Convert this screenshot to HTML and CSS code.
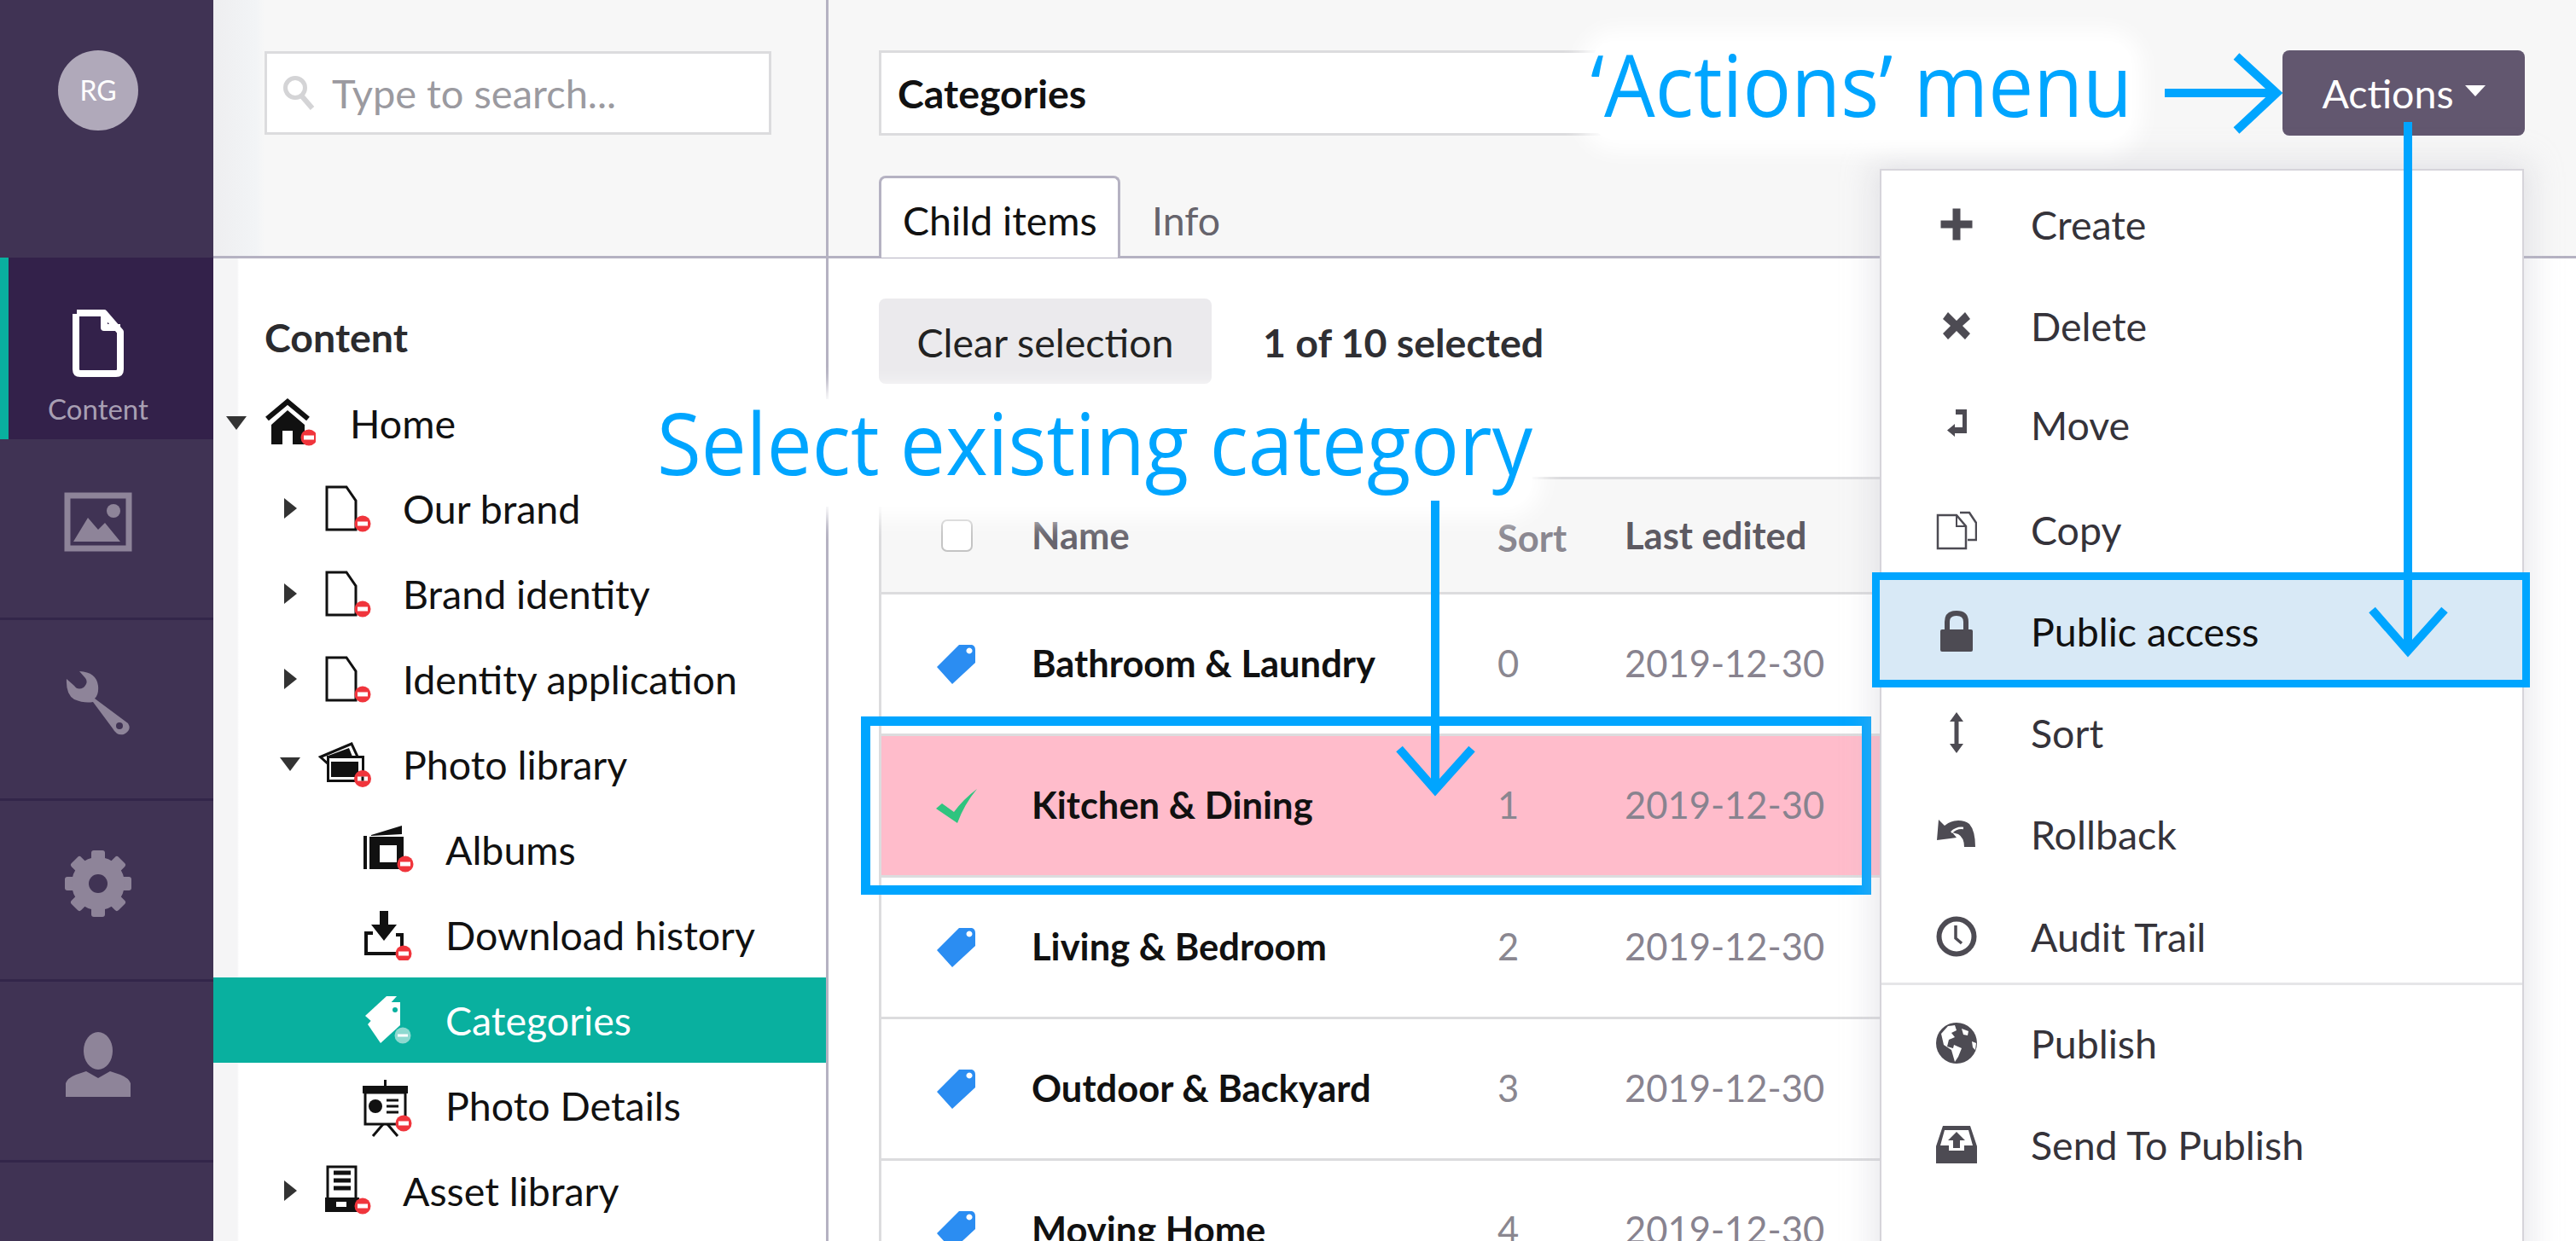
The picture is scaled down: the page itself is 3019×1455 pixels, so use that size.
FILE: index.html
```html
<!DOCTYPE html>
<html lang="en">
<head>
<meta charset="UTF-8">
<title>Categories</title>
<link rel="stylesheet" href="styles.css">
</head>
<body>

<svg class="defs" width="0" height="0">
  <symbol id="badge" viewBox="0 0 60 60">
    <circle cx="44" cy="48" r="9.5" fill="#f0353c"/>
    <rect x="38" y="45.5" width="12" height="5" fill="#fff"/>
  </symbol>
  <symbol id="i-home" viewBox="0 0 60 60">
    <path d="M3 25L27 5L51 25" fill="none" stroke="#111" stroke-width="6"/>
    <path d="M27 15L47 32V55H33V39H21V55H8V32Z" fill="#111"/>
    <circle cx="52" cy="47" r="9.5" fill="#f0353c"/>
    <rect x="46" y="44.5" width="12" height="5" fill="#fff"/>
  </symbol>
  <symbol id="i-doc" viewBox="0 0 60 60">
    <path d="M2 5H25L36 21V55H2Z" fill="#fff" stroke="#111" stroke-width="3"/>
    <use href="#badge"/>
  </symbol>
  <symbol id="i-photos" viewBox="0 0 60 60" overflow="visible">
    <path d="M-5.500 21.500L31 6L38 21V30H4Z" fill="#fff" stroke="#111" stroke-width="3"/>
    <path d="M1 21L28 11L32 21Z" fill="#111"/>
    <rect x="3.500" y="21.500" width="41" height="28" fill="#fff" stroke="#111" stroke-width="3"/>
    <rect x="7" y="27" width="32" height="18" fill="#111"/>
    <circle cx="44" cy="47" r="10" fill="#f0353c"/>
    <rect x="38" y="44.500" width="12" height="5" fill="#fff"/>
    <rect x="42.500" y="44.500" width="3" height="5" fill="#111"/>
  </symbol>
  <symbol id="i-albums" viewBox="0 0 60 60">
    <path d="M10 13L46 2V12L10 14Z" fill="#111"/>
    <rect x="1" y="14" width="4" height="39" fill="#111"/>
    <rect x="8" y="15" width="40" height="38" fill="#111"/>
    <rect x="20" y="25" width="20" height="20" fill="#fff"/>
    <use href="#badge" x="6" y="-1"/>
  </symbol>
  <symbol id="i-download" viewBox="0 0 60 60">
    <path d="M20 2H30V18H40L25 37L10 18H20Z" fill="#111"/>
    <path d="M12 28H4V52H46V30H39" fill="none" stroke="#111" stroke-width="4"/>
    <use href="#badge" x="4" y="4"/>
  </symbol>
  <symbol id="i-tags" viewBox="0 0 60 60">
    <path d="M28 2H40L12 33L3 25Z" fill="#fff"/>
    <path d="M29 9H44V36L21 57L6 35Z" fill="#fff"/>
    <circle cx="38" cy="18" r="3" fill="#09b09f"/>
    <circle cx="47" cy="48" r="9.5" fill="#8ed9d0"/>
    <rect x="41" y="46.5" width="12" height="3" fill="#fff"/>
  </symbol>
  <symbol id="i-board" viewBox="0 0 60 60" overflow="visible">
    <rect x="0" y="7" width="53" height="9" fill="#111"/>
    <rect x="25" y="0" width="3" height="8" fill="#111"/>
    <rect x="3" y="15" width="47" height="37" fill="#fff" stroke="#111" stroke-width="3"/>
    <circle cx="15" cy="31" r="8" fill="#111"/>
    <path d="M28 24H42M28 31H42M28 38H42" stroke="#111" stroke-width="3"/>
    <path d="M24 52L12 66M29 52L41 66" stroke="#111" stroke-width="3"/>
    <use href="#badge" x="4" y="3"/>
  </symbol>
  <symbol id="i-asset" viewBox="0 0 60 60">
    <rect x="3" y="2" width="33" height="40" fill="#fff" stroke="#111" stroke-width="3"/>
    <path d="M10 9H30M10 18H30M10 27H30" stroke="#111" stroke-width="5"/>
    <rect x="0" y="38" width="40" height="17" fill="#111"/>
    <rect x="13" y="43" width="12" height="6" fill="#fff"/>
    <use href="#badge"/>
  </symbol>
  <symbol id="i-tag" viewBox="0 0 48 46">
    <path fill-rule="evenodd" d="M27 0H42Q46 1 46 6V21L19 46L1 26ZM39 3.500A3.500 3.500 0 1 0 39.010 3.500Z" fill="#2b8df2"/>
  </symbol>
</svg>

<div class="app">

  <div class="nav">
    <div class="nav-top"><div class="avatar">RG</div></div>
    <div class="nav-item active">
      <svg width="62" height="80" viewBox="0 0 62 80"><path d="M6 4H38L57 26V70Q57 75 52 75H10Q5 75 5 70V5M38 4V21H57" fill="none" stroke="#fff" stroke-width="8" stroke-linejoin="round"/></svg>
      <span>Content</span>
    </div>
    <div class="nav-item">
      <svg width="80" height="70" viewBox="0 0 80 70"><rect x="4" y="4" width="72" height="62" fill="none" stroke="#8e8499" stroke-width="7"/><circle cx="58" cy="22" r="8" fill="#8e8499"/><path d="M11 58L28 30L40 44L48 36L66 58Z" fill="#8e8499"/></svg>
    </div>
    <div class="nav-item">
      <svg width="76" height="76" viewBox="0 0 76 76"><path d="M16 1Q36 2 38 18Q39 28 34 33L73 62Q78 70 68 75Q60 77 55 68L32 37Q22 39 10 34Q0 28 1 10L10 18Q14 24 21 20Q27 14 23 9Z" fill="#8e8499"/><circle cx="63" cy="65" r="4" fill="#403354"/></svg>
    </div>
    <div class="nav-item">
      <svg width="78" height="78" viewBox="-39 -39 78 78"><g fill="#8e8499"><rect x="-8" y="-39" width="16" height="78" rx="3"/><rect x="-8" y="-39" width="16" height="78" rx="3" transform="rotate(45)"/><rect x="-8" y="-39" width="16" height="78" rx="3" transform="rotate(90)"/><rect x="-8" y="-39" width="16" height="78" rx="3" transform="rotate(135)"/></g><circle r="21" fill="none" stroke="#8e8499" stroke-width="20"/><circle r="11" fill="#403354"/></svg>
    </div>
    <div class="nav-item">
      <svg width="76" height="76" viewBox="0 0 76 76"><ellipse cx="38" cy="22" rx="17" ry="22" fill="#8e8499"/><path d="M0 76V60Q2 54 12 50L24 46L38 54L52 46L64 50Q74 54 76 60V76Z" fill="#8e8499"/></svg>
    </div>
  </div>

  <div class="tree-col">
    <div class="head-box tree-head">
      <div class="search">
        <svg width="38" height="42" viewBox="0 0 38 42"><circle cx="15" cy="15" r="11.500" fill="none" stroke="#d4d4d6" stroke-width="5"/><path d="M23 25L35 39" stroke="#d4d4d6" stroke-width="6"/></svg>
        <span>Type to search...</span>
      </div>
    </div>
    <div class="tree">
      <div class="tree-title">Content</div>
      <div class="tree-row lvl0"><i class="caret down"></i><svg class="ti"><use href="#i-home"/></svg><span>Home</span></div>
      <div class="tree-row lvl1"><i class="caret"></i><svg class="ti"><use href="#i-doc"/></svg><span>Our brand</span></div>
      <div class="tree-row lvl1"><i class="caret"></i><svg class="ti"><use href="#i-doc"/></svg><span>Brand identity</span></div>
      <div class="tree-row lvl1"><i class="caret"></i><svg class="ti"><use href="#i-doc"/></svg><span>Identity application</span></div>
      <div class="tree-row lvl1"><i class="caret down"></i><svg class="ti"><use href="#i-photos"/></svg><span>Photo library</span></div>
      <div class="tree-row lvl2"><svg class="ti"><use href="#i-albums"/></svg><span>Albums</span></div>
      <div class="tree-row lvl2"><svg class="ti"><use href="#i-download"/></svg><span>Download history</span></div>
      <div class="tree-row lvl2 current"><svg class="ti"><use href="#i-tags"/></svg><span>Categories</span></div>
      <div class="tree-row lvl2"><svg class="ti"><use href="#i-board"/></svg><span>Photo Details</span></div>
      <div class="tree-row lvl1"><i class="caret"></i><svg class="ti"><use href="#i-asset"/></svg><span>Asset library</span></div>
    </div>
  </div>

  <div class="main">
    <div class="head-box main-head">
      <div class="title-row">
        <div class="title-input">Categories</div>
        <button class="actions-btn">Actions<i class="btn-caret"></i></button>
      </div>
      <div class="tabs">
        <div class="tab on">Child items</div>
        <div class="tab">Info</div>
      </div>
    </div>
    <div class="body">
      <div class="toolbar">
        <div class="clear-btn">Clear selection</div>
        <div class="sel-count">1 of 10 selected</div>
      </div>
      <div class="table">
        <div class="row thead">
          <div class="c-icon"><i class="check"></i></div>
          <div class="c-name">Name</div>
          <div class="c-sort">Sort</div>
          <div class="c-date">Last edited</div>
        </div>
        <div class="row">
          <div class="c-icon"><svg width="48" height="46"><use href="#i-tag"/></svg></div>
          <div class="c-name">Bathroom &amp; Laundry</div>
          <div class="c-sort">0</div>
          <div class="c-date">2019-12-30</div>
        </div>
        <div class="row picked">
          <div class="c-icon"><svg width="48" height="40" viewBox="0 0 48 40"><path d="M0 23L7 17L21 27Q32 12 48 0Q33 18 25 40Z" fill="#2fc47f"/></svg></div>
          <div class="c-name">Kitchen &amp; Dining</div>
          <div class="c-sort">1</div>
          <div class="c-date">2019-12-30</div>
        </div>
        <div class="row">
          <div class="c-icon"><svg width="48" height="46"><use href="#i-tag"/></svg></div>
          <div class="c-name">Living &amp; Bedroom</div>
          <div class="c-sort">2</div>
          <div class="c-date">2019-12-30</div>
        </div>
        <div class="row">
          <div class="c-icon"><svg width="48" height="46"><use href="#i-tag"/></svg></div>
          <div class="c-name">Outdoor &amp; Backyard</div>
          <div class="c-sort">3</div>
          <div class="c-date">2019-12-30</div>
        </div>
        <div class="row">
          <div class="c-icon"><svg width="48" height="46"><use href="#i-tag"/></svg></div>
          <div class="c-name">Moving Home</div>
          <div class="c-sort">4</div>
          <div class="c-date">2019-12-30</div>
        </div>
      </div>
    </div>
  </div>

  <div class="menu">
    <div class="menu-row"><svg viewBox="0 0 48 48"><path d="M19.500 5.500H28.500V19.500H42.500V28.500H28.500V42.500H19.500V28.500H5.500V19.500H19.500Z" fill="#4d4b53"/></svg>Create</div>
    <div class="menu-row"><svg viewBox="0 0 48 48"><path d="M14 8L24 18L34 8L40 16L31 24L40 33L34 40L24 30L14 40L8 33L17 24L8 16Z" fill="#4d4b53"/></svg>Delete</div>
    <div class="menu-row up"><svg viewBox="0 0 48 48"><path d="M23 6H36V34H22V38L13 30.500L22 23V27H31V12H23Z" fill="#4d4b53"/></svg>Move</div>
    <div class="menu-row"><svg viewBox="0 0 48 48"><path d="M28 4H39L47 16V36H37M2 7H24L35 20V46H2Z" fill="#fff" stroke="#4d4b53" stroke-width="2.500"/><path d="M24 7V20H35" fill="none" stroke="#4d4b53" stroke-width="2"/></svg>Copy</div>
    <div class="menu-row hl"><svg viewBox="0 0 48 48"><path d="M13 24V13Q13 3 24 3Q35 3 35 13V24" fill="none" stroke="#4d4b53" stroke-width="6"/><rect x="5" y="22" width="38" height="26" rx="2" fill="#4d4b53"/></svg>Public access</div>
    <div class="menu-row"><svg viewBox="0 0 48 48"><path d="M24 0L32 11H26.500V37H32L24 48L16 37H21.500V11H16Z" fill="#4d4b53"/></svg>Sort</div>
    <div class="menu-row"><svg viewBox="0 0 48 48"><path d="M3 7L10 14Q17 8 26 8Q34 8 39 12Q46 20 46 39H33Q33 28 26 24L19 22L24 28L1 31Z" fill="#4d4b53"/><path d="M18 22Q24 16 32 17" fill="none" stroke="#fff" stroke-width="2.500"/></svg>Rollback</div>
    <div class="menu-row"><svg viewBox="0 0 48 48"><circle cx="24" cy="24" r="20.500" fill="none" stroke="#4d4b53" stroke-width="6"/><path d="M23 11V26L30 32" fill="none" stroke="#4d4b53" stroke-width="3.500"/></svg>Audit Trail</div>
    <div class="menu-line"></div>
    <div class="menu-row"><svg viewBox="0 0 48 48"><circle cx="24" cy="24" r="24" fill="#4d4b53"/><path d="M6 13L14 4L22 3L24 9L18 12L22 17L15 20L13 28L20 30L21 26L30 30L26 40L22 46L18 32L9 26ZM30 7L38 10L37 15L32 14ZM42 22L47 24L46 32L43 29Z" fill="#fff"/></svg>Publish</div>
    <div class="menu-row"><svg viewBox="0 0 48 48"><path d="M8 2H40L48 26V46H0V26Z" fill="#4d4b53"/><path d="M10 7H38L43 25H33V31H15V25H5Z" fill="#fff"/><path d="M24 9L34 19H28V28H20V19H14Z" fill="#4d4b53"/></svg>Send To Publish</div>
  </div>

  <div class="callout callout-select">Select existing category</div>
  <div class="callout callout-actions">‘Actions’ menu</div>

  <svg class="arrows" width="3019" height="1455" viewBox="0 0 3019 1455">
    <path d="M1682 587V922M1640 878L1682 926L1725 878" />
    <path d="M2537 109H2664M2621 66L2668 109L2621 153" />
    <path d="M2822 143V758M2780 715L2822 763L2865 715" />
  </svg>

</div>

</body>
</html>
```

FILE: styles.css
```css
*,*::before,*::after{
  box-sizing:border-box;
}

body{
  margin:0;
  font-family:'Lato',sans-serif;
  font-size:46.5px;
  color:#1b1b1b;
  background:#fff;
}

.defs{
  position:absolute;
}

.app{
  position:relative;
  display:flex;
  height:1455px;
  overflow:hidden;
}

/* left nav */
.nav{
  width:250px;
  flex:none;
  background:#403354;
}

.nav-top{
  height:302px;
  padding:59px 20px 0 0;
}

.avatar{
  width:94px;
  height:94px;
  margin:auto;
  border-radius:50%;
  background:#b0a9ba;
  color:#fff;
  font-size:32px;
  line-height:94px;
  text-align:center;
}

.nav-item{
  height:212px;
  display:flex;
  flex-direction:column;
  align-items:center;
  justify-content:center;
  padding:0 20px 16px 0;
  border-bottom:3px solid #33264a;
}

.nav-item.active{
  height:213px;
  background:#33214a;
  border-left:10px solid #09b09f;
  border-bottom:none;
  padding:44px 30px 0 0;
  gap:16px;
  color:#a89fb3;
  font-size:33px;
}

/* shared top band */
.head-box{
  height:303px;
  background:#f7f7f7;
  border-bottom:3px solid #b5b2c2;
}

/* tree */
.tree-col{
  width:721px;
  flex:none;
  border-right:3px solid #b5b2c2;
  background:linear-gradient(90deg,#f5f5f6 0,#f5f5f6 28px,#fff 30px);
}

.tree-head{
  padding:60px 0 0 60px;
  background:linear-gradient(90deg,#eeeef0 0,#f2f4f6 50px,#f7f7f7 60px);
}

.search{
  width:594px;
  height:98px;
  background:#fff;
  border:3px solid #dcdcde;
  display:flex;
  align-items:center;
  gap:20px;
  padding-left:18px;
  color:#9b9aa0;
  font-size:47px;
}

.tree-title{
  padding:64px 0 0 60px;
  height:143px;
  font-weight:700;
  color:#2b2b2e;
  line-height:56px;
}

.tree-row{
  height:100px;
  display:flex;
  align-items:center;
  color:#111;
}

.tree-row .ti{
  width:60px;
  height:60px;
  flex:none;
  overflow:visible;
}

.caret{
  width:0;
  height:0;
  flex:none;
  border-style:solid;
  border-color:transparent transparent transparent #333;
  border-width:12px 0 12px 15px;
}

.caret.down{
  border-color:#333 transparent transparent transparent;
  border-width:16px 12px 0 12px;
}

.lvl0{
  padding-left:15px;
}
.lvl0 .caret{
  margin-right:21px;
}
.lvl0 .ti{
  margin-right:40px;
}

.lvl1{
  padding-left:83px;
}
.lvl1 .caret{
  margin-right:33px;
}
.lvl1 .caret.down{
  margin-left:-5px;
  margin-right:29px;
}
.lvl1 .ti{
  margin-right:31px;
}

.lvl2{
  padding-left:175px;
}
.lvl2 .ti{
  margin-right:37px;
}

.tree-row.current{
  background:#09b09f;
  color:#fff;
}

/* main area */
.main{
  flex:1;
  min-width:0;
}

.main-head{
  padding:59px 0 0 59px;
  position:relative;
}

.title-row{
  display:flex;
  height:100px;
}

.title-input{
  width:1400px;
  height:100px;
  background:#fff;
  border:3px solid #dcdcde;
  padding-left:19px;
  font-weight:700;
  line-height:94px;
  color:#111;
}

.actions-btn{
  width:284px;
  height:100px;
  margin-left:245px;
  border:none;
  border-radius:8px;
  background:#62576f;
  color:#fff;
  font-family:inherit;
  font-size:46.5px;
  display:flex;
  align-items:center;
  justify-content:center;
  gap:13px;
}

.btn-caret{
  border-style:solid;
  border-color:#fff transparent transparent transparent;
  border-width:13px 12px 0 12px;
  margin-top:-6px;
}

.tabs{
  display:flex;
  margin-top:47px;
}

.tab{
  height:96px;
  padding:24px 27px 0 27px;
  color:#66646c;
}

.tab.on{
  width:283px;
  background:#fff;
  color:#111;
  border:3px solid #b5b2c2;
  border-bottom:none;
  border-radius:8px 8px 0 0;
  padding:21px 0 0 25px;
  white-space:nowrap;
  position:relative;
  z-index:1;
}

.tab + .tab{
  padding-left:37px;
}

.body{
  padding:47px 0 0 59px;
}

.toolbar{
  display:flex;
  align-items:center;
  gap:60px;
  height:100px;
}

.clear-btn{
  width:390px;
  height:100px;
  line-height:102px;
  text-align:center;
  border-radius:8px;
  background:#ebeaed;
  color:#222;
}

.sel-count{
  font-weight:700;
  color:#2f2f33;
  padding-top:2px;
}

.table{
  width:1850px;
  margin-top:109px;
  border-top:3px solid #dcdcde;
  border-left:3px solid #dcdcde;
  font-size:43.5px;
}

.row{
  height:166px;
  display:flex;
  align-items:center;
  border-bottom:3px solid #dcdcde;
  position:relative;
}

.row.thead{
  height:135px;
  background:#f7f7f7;
  font-weight:700;
  color:#67646d;
}

.row.picked{
  background:#ffbccb;
}

/* blue frame drawn round the picked row */
.row.picked::after{
  content:"";
  position:absolute;
  left:-24px;
  top:-23px;
  width:1184px;
  height:209px;
  border:11px solid #00a5ff;
}

.c-icon{
  width:176px;
  flex:none;
  display:flex;
  justify-content:center;
}

.c-name{
  width:546px;
  flex:none;
  font-weight:700;
  color:#111;
  margin-top:-4px;
}

.thead .c-name{
  color:#67646d;
  margin-top:-2px;
}

.c-sort{
  width:149px;
  flex:none;
  color:#8a8790;
  margin-top:-4px;
}

.thead .c-sort{
  margin-top:4px;
}

.c-date{
  flex:none;
  color:#88838f;
  margin-top:-4px;
}

.thead .c-date{
  color:#5d5a62;
  margin-top:-2px;
}

.check{
  width:37px;
  height:38px;
  background:#fff;
  border:2px solid #c4c4c4;
  border-radius:7px;
}

/* actions menu */
.menu{
  position:absolute;
  left:2203px;
  top:198px;
  width:755px;
  height:1300px;
  padding-top:3px;
  background:#fff;
  border:2px solid #d6d4da;
  box-shadow:0 0 34px 8px rgba(190,190,200,0.35);
  color:#35333a;
}

.menu-row{
  height:119.3px;
  display:flex;
  align-items:center;
  padding-left:64px;
  gap:63px;
  position:relative;
  isolation:isolate;
}

.menu-row.up{
  padding-bottom:6px;
}

.menu-row svg{
  width:48px;
  height:48px;
  flex:none;
}

.menu-row.hl{
  color:#111;
}

.menu-row.hl::before{
  content:"";
  position:absolute;
  z-index:-1;
  left:-11px;
  right:-9px;
  top:-9px;
  bottom:-7px;
  background:#d8e9f6;
  border:9px solid #00a5ff;
}

.menu-line{
  height:3px;
  margin:-5px 0 8px;
  background:#e6e6e8;
}

/* blue annotations */
.callout{
  position:absolute;
  font-family:'Open Sans',sans-serif;
  font-size:101px;
  line-height:100px;
  color:#00a5ff;
  white-space:nowrap;
  background:#fff;
  border-radius:30px;
  box-shadow:0 0 24px 14px #fff;
  transform:scaleX(0.935);
  transform-origin:left top;
}

.callout-select{
  left:770px;
  top:468px;
  padding-bottom:26px;
}

.callout-actions{
  left:1864px;
  top:48px;
  padding-bottom:16px;
}

.arrows{
  position:absolute;
  left:0;
  top:0;
  pointer-events:none;
}

.arrows path{
  fill:none;
  stroke:#00a5ff;
  stroke-width:10;
}
```
